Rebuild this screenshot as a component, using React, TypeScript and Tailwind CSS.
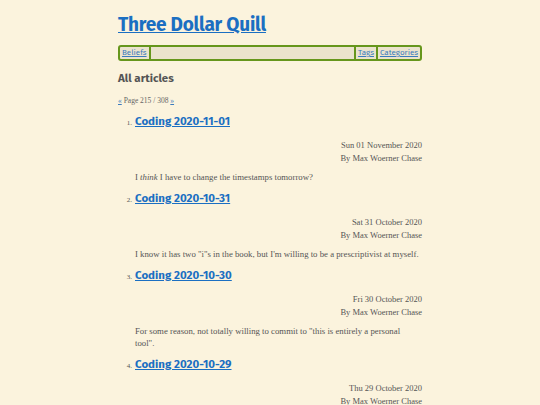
import React from 'react';

type Post = {
  title: string;
  date: string;
  body: React.ReactNode;
};

const posts: Post[] = [
  {
    title: 'Coding 2020-11-01',
    date: 'Sun 01 November 2020',
    body: (
      <>
        I <em>think</em> I have to change the timestamps tomorrow?
      </>
    ),
  },
  {
    title: 'Coding 2020-10-31',
    date: 'Sat 31 October 2020',
    body: <>I know it has two "i"s in the book, but I'm willing to be a prescriptivist at myself.</>,
  },
  {
    title: 'Coding 2020-10-30',
    date: 'Fri 30 October 2020',
    body: <>For some reason, not totally willing to commit to "this is entirely a personal tool".</>,
  },
  {
    title: 'Coding 2020-10-29',
    date: 'Thu 29 October 2020',
    body: null,
  },
];

const heading = "font-['Fira_Sans','Open_Sans',sans-serif]";
const serif = "font-['Liberation_Serif','DejaVu_Serif',serif]";

export default function App() {
  return (
    <div className={`h-[405px] overflow-hidden bg-[#fbf3dd] text-[#555] ${serif}`}>
      <div className="mx-auto w-[304px] pt-[14px]">
        {/* Site title */}
        <h1 className={`${heading} text-[19px] font-bold leading-[22px] tracking-[-0.2px]`}>
          <a href="#" className="text-[#1b6fc2] underline">
            Three Dollar Quill
          </a>
        </h1>

        {/* Nav */}
        <nav className="mt-[9px] flex h-[16px] items-stretch rounded-[3px] border-2 border-[#66961c] bg-[#ebe3cd] font-['Fira_Sans','Open_Sans',sans-serif] text-[8px] leading-[12px]">
          <a href="#" className="border-r-2 border-[#66961c] px-[2px] text-[#3b7bbd] underline">
            Beliefs
          </a>
          <div className="flex-1" />
          <a href="#" className="border-l-2 border-r-2 border-[#66961c] px-[2px] text-[#3b7bbd] underline">
            Tags
          </a>
          <a href="#" className="px-[2px] text-[#3b7bbd] underline">
            Categories
          </a>
        </nav>

        <h2 className={`${heading} mt-[8px] text-[11.5px] font-bold leading-[18px] text-[#555]`}>All articles</h2>

        <p className="mt-[9px] text-[7.5px] leading-[10px] text-[#666]">
          <a href="#" className="text-[#3b7bbd] underline">«</a> Page 215 / 308{' '}
          <a href="#" className="text-[#3b7bbd] underline">»</a>
        </p>

        <ol className="mt-[6px] pl-[17px]">
          {posts.map((p, i) => (
            <li key={p.title} className="flex flex-col pb-[6px]">
              <div className="flex items-baseline">
                <span className="w-[6px] -ml-[9px] mr-[3px] text-right text-[7px]">{i + 1}.</span>
                <a href="#" className={`${heading} text-[11.5px] font-bold leading-[18px] text-[#1b6fc2] underline`}>
                  {p.title}
                </a>
              </div>
              <div className="mt-[9px] text-right text-[8.5px] leading-[12.5px]">
                <div>{p.date}</div>
                <div>By Max Woerner Chase</div>
              </div>
              {p.body && <p className="mt-[7px] pr-[2px] text-[8.75px] leading-[12px]">{p.body}</p>}
            </li>
          ))}
        </ol>
      </div>
    </div>
  );
}
